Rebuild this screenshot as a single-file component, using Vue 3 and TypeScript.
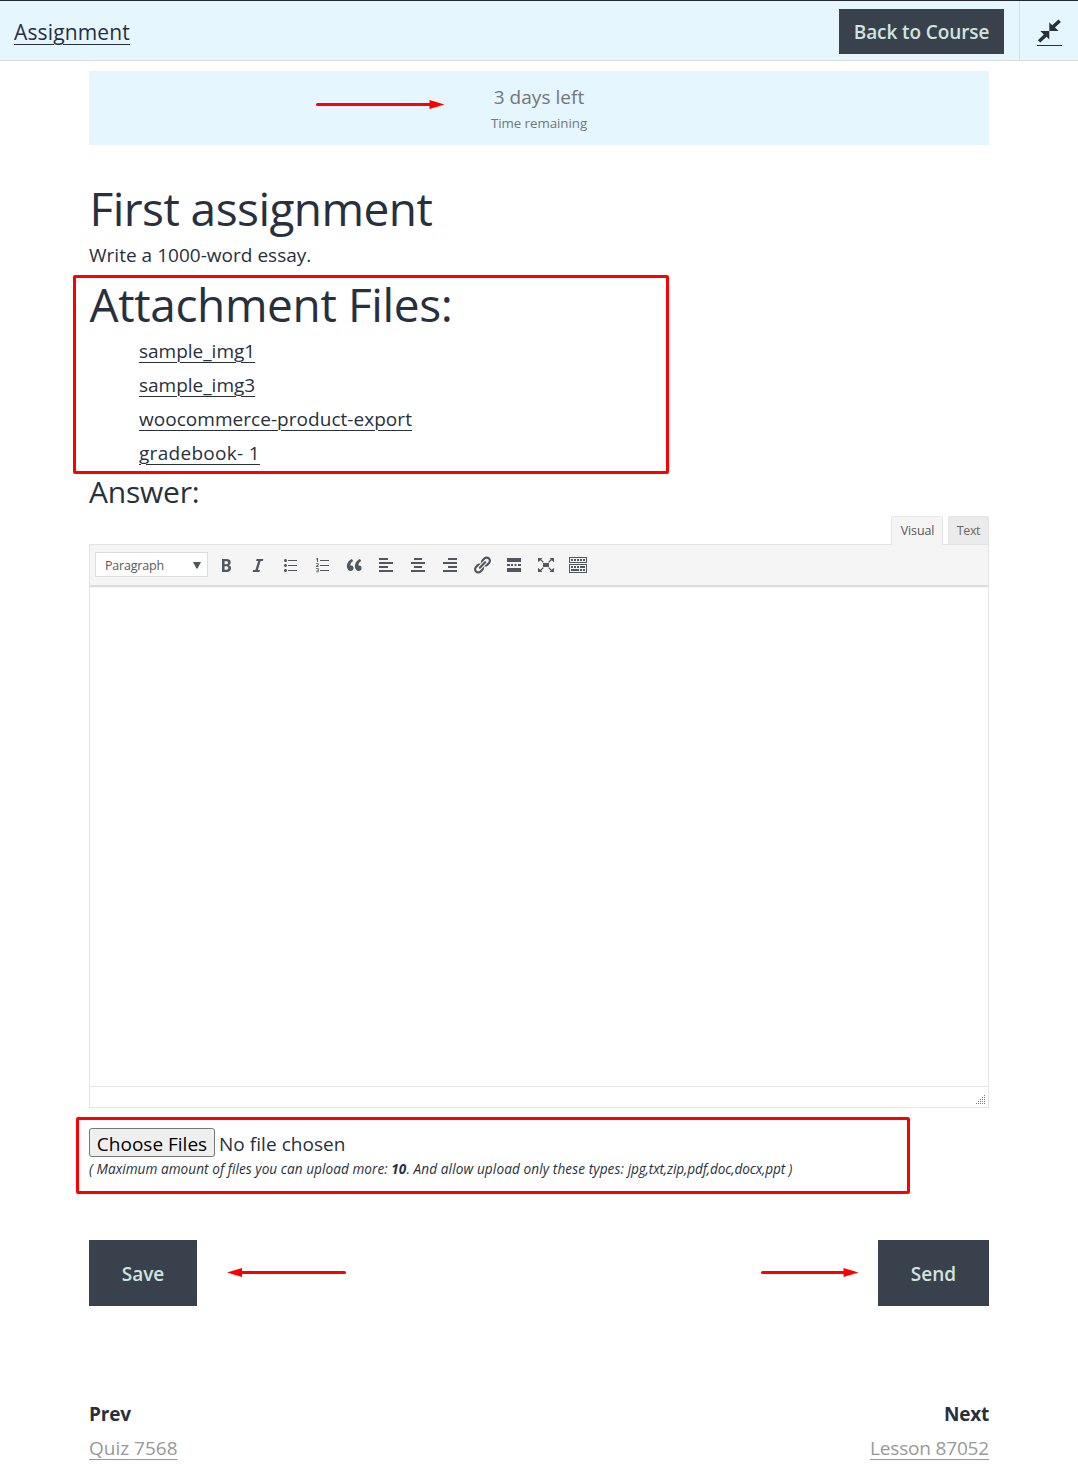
<script setup lang="ts">
interface Tool {
  name: string
  d: string
}

interface Attachment {
  label: string
  spacing: string
}

const attachments: Attachment[] = [
  { label: 'sample_img1', spacing: '0' },
  { label: 'sample_img3', spacing: '0' },
  { label: 'woocommerce-product-export', spacing: '0.04px' },
  { label: 'gradebook- 1', spacing: '0.3px' },
]

const tools: Tool[] = [
  { name: 'Bold', d: 'M6 4v13h4.54c1.37 0 2.46-.33 3.26-1 .8-.66 1.2-1.58 1.2-2.77 0-.84-.17-1.51-.51-2.01s-.9-.85-1.67-1.03v-.09c.57-.1 1.02-.4 1.36-.9s.51-1.13.51-1.91c0-1.14-.39-1.98-1.17-2.5C12.75 4.26 11.5 4 9.78 4H6zm2.57 5.15V6.26h1.36c.73 0 1.27.11 1.61.32.34.22.51.58.51 1.07 0 .54-.16.92-.47 1.15s-.82.35-1.51.35h-1.5zm0 2.19h1.6c1.44 0 2.16.53 2.16 1.61 0 .6-.17 1.05-.51 1.34s-.86.43-1.57.43H8.57v-3.38z' },
  { name: 'Italic', d: 'M14.78 6h-2.13l-2.8 9h2.12l-.62 2H4.6l.62-2h2.14l2.8-9H8.03l.62-2h6.75z' },
  { name: 'Bulleted list', d: 'M5.5 7C4.67 7 4 6.33 4 5.5 4 4.68 4.67 4 5.5 4 6.32 4 7 4.68 7 5.5 7 6.33 6.32 7 5.5 7zM8 5h9v1H8V5zm-2.5 7c-.83 0-1.5-.67-1.5-1.5C4 9.68 4.67 9 5.5 9c.82 0 1.5.68 1.5 1.5 0 .83-.68 1.5-1.5 1.5zM8 10h9v1H8v-1zm-2.5 7c-.83 0-1.5-.67-1.5-1.5 0-.82.67-1.5 1.5-1.5.82 0 1.5.68 1.5 1.5 0 .83-.68 1.5-1.5 1.5zM8 15h9v1H8v-1z' },
  { name: 'Numbered list', d: 'M6 7V3h-.7L4 4v.6h1V7zM8 5h9v1H8zM8 10h9v1H8zM8 15h9v1H8zM4 8.2h2.6v2L5.1 11.200h1.6v.8H4v-1l1.700-1.300V9H4zM4 13.200h2.700V17.200H4v-.8h1.800v-.8H4.600v-.7h1.200V14H4z' },
  { name: 'Blockquote', d: 'M9.49 13.22c0-.74-.2-1.38-.61-1.9-.62-.78-1.83-.88-2.53-.72-.29-1.65 1.11-3.75 2.92-4.65L7.88 4c-2.73 1.3-5.42 4.28-4.96 8.05C3.21 14.43 4.59 16 6.54 16c.85 0 1.56-.25 2.12-.75s.83-1.18.83-2.03zm8.05 0c0-.74-.2-1.38-.61-1.9-.63-.78-1.83-.88-2.53-.72-.29-1.65 1.11-3.75 2.92-4.65L15.93 4c-2.73 1.3-5.41 4.28-4.95 8.05.29 2.38 1.66 3.95 3.61 3.95.85 0 1.56-.25 2.12-.75s.83-1.18.83-2.03z' },
  { name: 'Align left', d: 'M12 5V3H3v2h9zm5 4V7H3v2h14zm-5 4v-2H3v2h9zm5 4v-2H3v2h14z' },
  { name: 'Align center', d: 'M14 5V3H6v2h8zm3 4V7H3v2h14zm-3 4v-2H6v2h8zm3 4v-2H3v2h14z' },
  { name: 'Align right', d: 'M17 5V3H8v2h9zm0 4V7H3v2h14zm0 4v-2H8v2h9zm0 4v-2H3v2h14z' },
  { name: 'Insert link', d: 'M17.74 2.76c1.68 1.69 1.68 4.41 0 6.1l-1.53 1.52c-1.12 1.12-2.7 1.47-4.14 1.09l2.62-2.61.76-.77.76-.76c.84-.84.84-2.2 0-3.04-.84-.85-2.2-.85-3.04 0l-.77.76-3.38 3.38c-.37-1.44-.02-3.02 1.1-4.14l1.52-1.53c1.69-1.68 4.42-1.68 6.1 0zM8.59 13.43l5.34-5.34c.42-.42.42-1.1 0-1.52-.44-.43-1.13-.39-1.53 0l-5.33 5.34c-.42.42-.42 1.1 0 1.52.44.43 1.13.39 1.52 0zm-.76 2.29l4.14-4.15c.38 1.44.03 3.02-1.09 4.14l-1.52 1.53c-1.69 1.68-4.41 1.68-6.1 0-1.68-1.68-1.68-4.42 0-6.1l1.53-1.52c1.12-1.12 2.7-1.47 4.14-1.1l-4.14 4.15c-.85.84-.85 2.2 0 3.05.84.84 2.2.84 3.04 0z' },
  { name: 'Read more', d: 'M17 7V3H3v4h14zM6 11V9H3v2h3zm3 0V9H7v2h2zm3.500 0V9h-2v2zM17 11V9h-3v2zM17 17v-4H3v4h14z' },
  { name: 'Fullscreen', d: 'M7 8h6v4H7zM2 3h4.500L5.200 4.300 7.800 6.900 6.900 7.800 4.300 5.200 2 7.200zM18 3h-4.500l1.300 1.300-2.600 2.600.9.9 2.600-2.600L18 7.200zM2 17h4.500l-1.300-1.300 2.600-2.600-.9-.9-2.600 2.600L2 12.800zM18 17h-4.500l1.300-1.300-2.600-2.600.9-.9 2.600 2.600 2.300-2z' },
  { name: 'Toolbar toggle', d: 'M19 2v6H1V2h18zm-1 5V3H2v4h16zM5 4v2H3V4h2zm3 0v2H6V4h2zm3 0v2H9V4h2zm3 0v2h-2V4h2zm3 0v2h-2V4h2zm2 5v9H1V9h18zm-1 8v-7H2v7h16zM5 11v2H3v-2h2zm3 0v2H6v-2h2zm3 0v2H9v-2h2zm6 0v2h-5v-2h5zm-6 3v2H3v-2h8zm3 0v2h-2v-2h2zm3 0v2h-2v-2h2z' },
]

// Dots of the resize grip: row and column on a 2px lattice
const grip: [number, number][] = []
for (let row = 0; row < 5; row++) {
  for (let col = 4 - row; col < 5; col++) grip.push([col * 2, row * 2])
}
</script>

<template>
  <div class="page">
    <header class="topbar">
      <a class="title">Assignment</a>
      <div class="right">
        <a class="back">Back to Course</a>
        <a class="collapse">
          <svg width="25" height="24" viewBox="0 0 25 24">
            <path d="M12.300 12V3.300l2.900 2.900L21.500.6l2.400 2.300-5.900 5.700 3.700 3.400z" />
            <path d="M12.300 12v8.500l-2.700-2.700L3.300 23.600.9 21.200l5.900-5.700L3.300 12z" />
          </svg>
        </a>
      </div>
    </header>

    <main class="content">
      <section class="timer">
        <div class="left">3 days left</div>
        <div class="caption">Time remaining</div>
      </section>

      <h1 class="first">First assignment</h1>
      <p class="desc">Write a 1000-word essay.</p>
      <h1 class="files">Attachment Files:</h1>
      <ul class="list">
        <li v-for="a in attachments" :key="a.label">
          <a :style="{ letterSpacing: a.spacing }">{{ a.label }}</a>
        </li>
      </ul>
      <h3 class="answer">Answer:</h3>

      <div class="tabs">
        <div class="tab active">Visual</div>
        <div class="tab text">Text</div>
      </div>
      <div class="editor">
        <div class="toolbar">
          <div class="select">
            <span>Paragraph</span>
            <svg width="8" height="7" viewBox="0 0 8 7"><path d="M0 0h8L4.600 6.500H3.400z" /></svg>
          </div>
          <svg v-for="t in tools" :key="t.name" class="tool" width="20" height="20" viewBox="0 0 20 20">
            <path :d="t.d" fill-rule="evenodd" />
          </svg>
        </div>
        <div class="area"></div>
        <div class="status">
          <svg width="10" height="10" viewBox="0 0 10 10" shape-rendering="crispEdges">
            <rect v-for="([x, y], i) in grip" :key="i" :x="x" :y="y" width="1" height="1" />
          </svg>
        </div>
      </div>

      <div class="upload">
        <span class="choose">Choose Files</span>
        <span class="none">No file chosen</span>
      </div>
      <div class="hint">( Maximum amount of files you can upload more: <b>10</b><span class="allow">. And allow upload only these types: </span><span class="types">jpg,txt,zip,pdf,doc,docx,ppt )</span></div>

      <div class="actions">
        <div class="btn save">Save</div>
        <div class="btn send">Send</div>
      </div>

      <nav class="nav">
        <div>
          <div class="dir">Prev</div>
          <a class="quiz">Quiz 7568</a>
        </div>
        <div class="next">
          <div class="dir">Next</div>
          <a class="lesson">Lesson 87052</a>
        </div>
      </nav>
    </main>

    <div class="mark mark-files"></div>
    <div class="mark mark-upload"></div>
    <svg class="arrow arrow-timer" width="130" height="11" viewBox="0 0 130 11">
      <path class="shaft" d="M1.500 5.500H115" /><path d="M113.500 1L128.500 5.500 113.500 10z" />
    </svg>
    <svg class="arrow arrow-save" width="122" height="11" viewBox="0 0 122 11">
      <path class="shaft" d="M15 5.500H118.500" /><path d="M16 1L1 5.500 16 10z" />
    </svg>
    <svg class="arrow arrow-send" width="100" height="11" viewBox="0 0 100 11">
      <path class="shaft" d="M2.500 5.500H85" /><path d="M83.500 1L98.500 5.500 83.500 10z" />
    </svg>
  </div>
</template>

<style>
body {
  background: #fff;
}
</style>

<style scoped>
.page {
  position: relative;
  box-sizing: border-box;
  width: 1078px;
  height: 1472px;
  overflow: hidden;
  background: #fff;
  color: #28303d;
  font-family: "Open Sans", "Noto Sans", sans-serif;
  font-size: 19px;
  line-height: 34px;
}
a {
  text-decoration: underline;
  text-decoration-thickness: 1px;
  text-underline-offset: 4px;
}
.topbar {
  box-sizing: border-box;
  height: 61px;
  border-top: 1px solid #23262f;
  border-bottom: 1px solid #dcdcdc;
  background: #e5f6ff;
  display: flex;
  justify-content: space-between;
}
.title {
  margin: 14px 0 0 14px;
  font-size: 21px;
  letter-spacing: 0.15px;
}
.right {
  display: flex;
}
.back {
  box-sizing: border-box;
  width: 165px;
  height: 45px;
  margin: 8px 15px 0 0;
  background: #39414d;
  color: #d1e4dd;
  font-weight: 600;
  line-height: 46px;
  text-align: center;
  text-decoration: none;
  letter-spacing: -0.1px;
}
.collapse {
  box-sizing: border-box;
  width: 59px;
  border-left: 1px solid #d8dfe3;
  padding: 18px 0 0 17px;
}
.collapse svg {
  display: block;
  padding-bottom: 2px;
  border-bottom: 1px solid #28303d;
  fill: #28303d;
}
.content {
  width: 900px;
  margin: 10px auto 0;
}
.timer {
  box-sizing: border-box;
  height: 74px;
  padding-top: 9px;
  background: #e5f6ff;
  color: #757575;
  text-align: center;
}
.left {
  letter-spacing: 0.05px;
}
.caption {
  font-size: 13.3px;
  line-height: 18px;
  letter-spacing: -0.04px;
}
h1 {
  margin: 0;
  font-size: 46px;
  font-weight: 400;
  line-height: 62px;
}
.first {
  height: 61px;
  margin-top: 32px;
  letter-spacing: -0.55px;
  text-indent: 0.5px;
}
.files {
  height: 62px;
  line-height: 64px;
  letter-spacing: -0.38px;
  text-indent: 0.5px;
}
.desc {
  margin: 0;
  letter-spacing: 0.02px;
}
.list {
  margin: 0;
  padding: 0 0 0 50px;
  list-style: none;
}
.list li {
  height: 34px;
}
.answer {
  margin: 0;
  height: 46px;
  font-size: 30px;
  font-weight: 400;
  line-height: 44px;
  letter-spacing: -0.2px;
}
.tabs {
  display: flex;
  justify-content: flex-end;
  gap: 5px;
  height: 28px;
}
.tab {
  box-sizing: border-box;
  height: 28px;
  border: 1px solid #e5e5e5;
  border-bottom: 0;
  border-radius: 2px 2px 0 0;
  background: #ebebeb;
  color: #666;
  font-size: 12.5px;
  line-height: 27px;
  text-align: center;
}
.tab.active {
  position: relative;
  z-index: 1;
  width: 52px;
  height: 29px;
  padding-left: 1px;
  background: #f5f5f5;
  color: #555;
  letter-spacing: -0.1px;
}
.tab.text {
  width: 41px;
  letter-spacing: -0.4px;
}
.editor {
  box-sizing: border-box;
  height: 564px;
  border: 1px solid #e5e5e5;
}
.toolbar {
  box-sizing: border-box;
  display: flex;
  align-items: flex-start;
  height: 42px;
  padding: 7px 0 0 5px;
  border-bottom: 2px solid #ddd;
  background: #f5f5f5;
  box-shadow: 0 1px 1px rgba(0, 0, 0, 0.04);
}
.select {
  box-sizing: border-box;
  display: flex;
  align-items: center;
  justify-content: space-between;
  width: 113px;
  height: 25px;
  margin-right: 8px;
  padding: 2px 6px 0 9px;
  border: 1px solid #ddd;
  background: #fff;
  color: #595959;
  font-size: 12.5px;
  line-height: 21px;
  letter-spacing: -0.2px;
}
.select svg {
  fill: #50575e;
}
.tool {
  margin: 3px 12px 0 0;
  fill: #50575e;
}
.area {
  height: 499px;
}
.status {
  box-sizing: border-box;
  display: flex;
  justify-content: flex-end;
  height: 21px;
  padding: 8px 2px 0 0;
  border-top: 1px solid #e5e5e5;
}
.status svg {
  fill: #808080;
}
.upload {
  display: flex;
  height: 29px;
  margin-top: 20px;
}
.choose {
  box-sizing: border-box;
  width: 126px;
  border: 1px solid #767676;
  border-radius: 3px;
  background: #efefef;
  color: #000;
  line-height: 30px;
  text-align: center;
}
.none {
  margin-left: 4px;
  line-height: 32px;
  letter-spacing: 0.05px;
}
.hint {
  height: 83px;
  font-size: 13.6px;
  font-style: italic;
  line-height: 24px;
  letter-spacing: 0.05px;
  white-space: nowrap;
}
.allow {
  letter-spacing: 0.11px;
}
.types {
  letter-spacing: -0.14px;
}
.actions {
  display: flex;
  justify-content: space-between;
}
.btn {
  height: 66px;
  background: #39414d;
  color: #d1e4dd;
  font-weight: 600;
  line-height: 68px;
  text-align: center;
}
.save {
  width: 108px;
}
.send {
  width: 111px;
}
.nav {
  display: flex;
  justify-content: space-between;
  margin-top: 91px;
}
.nav a {
  color: #999;
}
.next {
  text-align: right;
}
.dir {
  font-weight: 700;
  letter-spacing: -0.2px;
}
.lesson {
  letter-spacing: -0.17px;
}
.mark {
  position: absolute;
  box-sizing: border-box;
  border: 3px solid #f00;
  border-radius: 2px;
}
.mark-files {
  left: 73px;
  top: 275px;
  width: 596px;
  height: 199px;
}
.mark-upload {
  left: 76px;
  top: 1117px;
  width: 834px;
  height: 77px;
}
.arrow {
  position: absolute;
  fill: #f00;
}
.shaft {
  stroke: #f00;
  stroke-width: 3;
  stroke-linecap: round;
}
.arrow-timer {
  left: 316px;
  top: 99px;
}
.arrow-save {
  left: 226px;
  top: 1267px;
}
.arrow-send {
  left: 760px;
  top: 1267px;
}
</style>
